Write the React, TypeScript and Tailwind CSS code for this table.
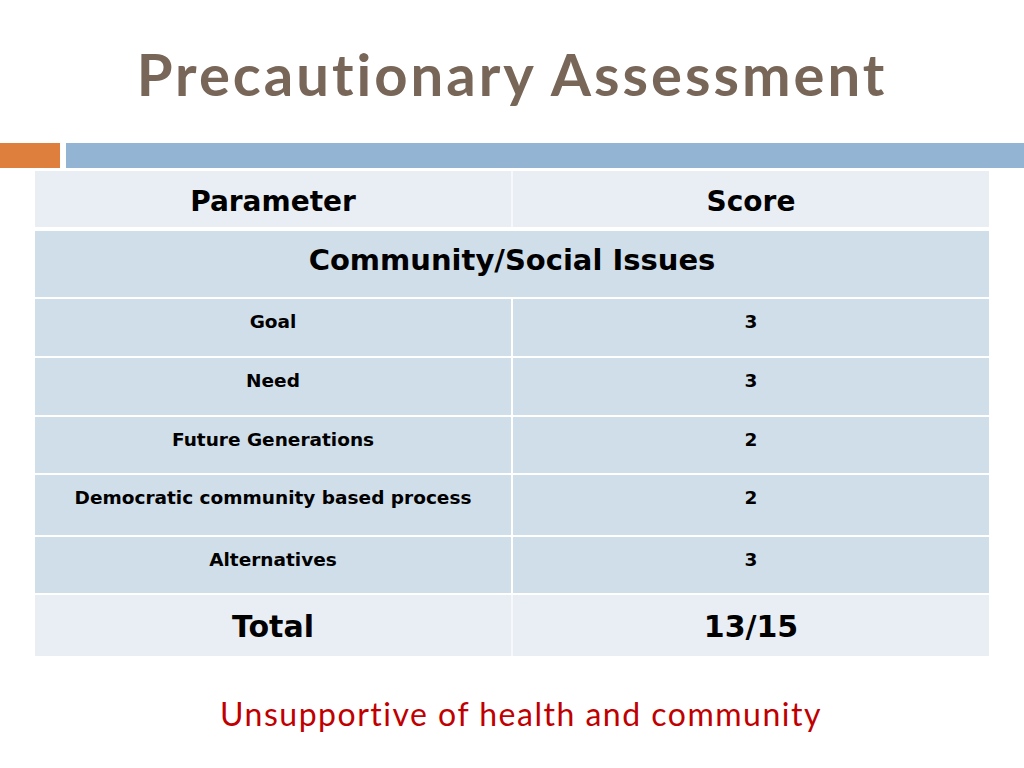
import React from "react";

const rows = [
  { p: "Goal", s: "3", h: "h-[57px]" },
  { p: "Need", s: "3", h: "h-[57px]" },
  { p: "Future Generations", s: "2", h: "h-[56px]" },
  { p: "Democratic community based process", s: "2", h: "h-[60px]" },
  { p: "Alternatives", s: "3", h: "h-[56px]" },
];

export default function App() {
  return (
    <div
      className="w-[1024px] h-[768px] bg-white flex flex-col"
      style={{ fontFamily: "Lato, 'Open Sans', sans-serif" }}
    >
      <div className="h-[143px] flex justify-center pt-[45px]">
        <h1 className="text-[58px] leading-[58px] font-bold text-[#786659] tracking-[3px]">
          Precautionary Assessment
        </h1>
      </div>
      <div className="h-[25px] flex gap-[6px]">
        <div className="w-[60px] bg-[#df7f3e]" />
        <div className="flex-1 bg-[#93b5d3]" />
      </div>
      <div
        className="ml-[35px] w-[954px] mt-[3px] flex flex-col text-black font-bold"
        style={{ fontFamily: "'DejaVu Sans', Lato, sans-serif" }}
      >
        <div className="h-[56px] flex bg-[#e9edf4]">
          <div className="w-[476px] flex items-center justify-center pt-[6px] text-[28px] leading-[34px]">Parameter</div>
          <div className="w-[2px] bg-white/60" />
          <div className="flex-1 flex items-center justify-center pt-[6px] text-[28px] leading-[34px]">Score</div>
        </div>
        <div className="h-[66px] mt-[4px] bg-[#d0dee9] flex items-start justify-center pt-[11px] text-[29px] leading-[36px]">
          Community/Social Issues
        </div>
        {rows.map((r) => (
          <div key={r.p} className={`${r.h} mt-[2px] flex bg-[#d0dee9]`}>
            <div className="w-[476px] flex justify-center pt-[11px] text-[18.5px] leading-[24px]">{r.p}</div>
            <div className="w-[2px] bg-white" />
            <div className="flex-1 flex justify-center pt-[11px] text-[18.5px] leading-[24px]">{r.s}</div>
          </div>
        ))}
        <div className="h-[61px] mt-[2px] flex bg-[#e9edf4]">
          <div className="w-[476px] flex items-center justify-center pt-[2px] text-[30px] leading-[36px]">Total</div>
          <div className="w-[2px] bg-white/60" />
          <div className="flex-1 flex items-center justify-center pt-[2px] text-[30px] leading-[36px]">13/15</div>
        </div>
      </div>
      <div className="flex justify-center mt-[38px] pl-[18px]">
        <p className="text-[32px] leading-[40px] text-[#c00000] tracking-[1.5px]">
          Unsupportive of health and community
        </p>
      </div>
    </div>
  );
}
